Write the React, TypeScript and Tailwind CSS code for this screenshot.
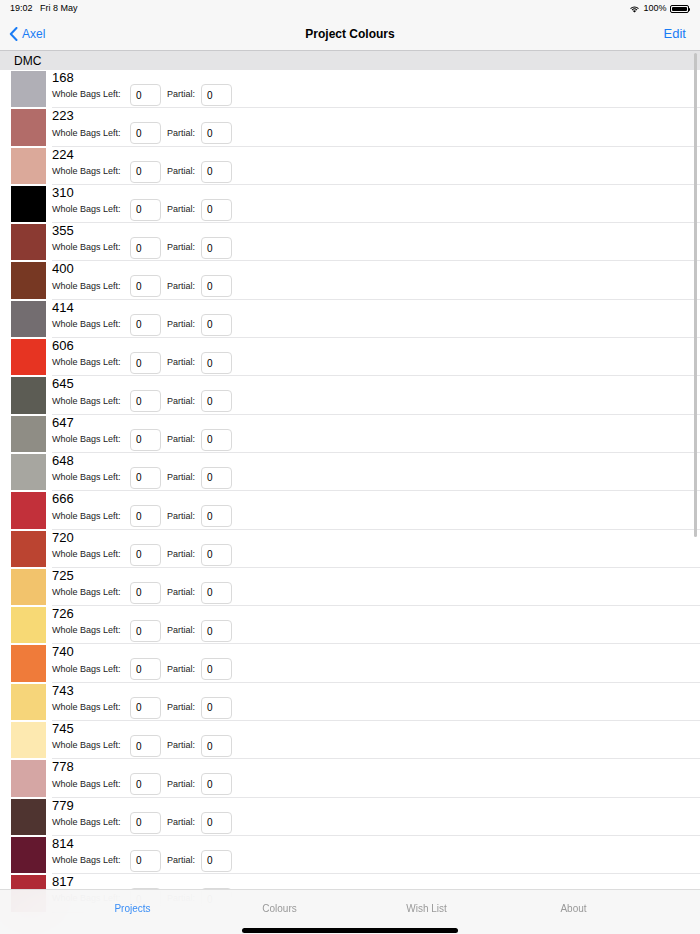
const colours: [string, string][] = [
  ["168", "#b0afb6"],
  ["223", "#b26c69"],
  ["224", "#dba99a"],
  ["310", "#000000"],
  ["355", "#8b3a32"],
  ["400", "#773823"],
  ["414", "#736d70"],
  ["606", "#e63422"],
  ["645", "#5c5c54"],
  ["647", "#8f8d85"],
  ["648", "#a7a6a0"],
  ["666", "#c2303a"],
  ["720", "#bb4431"],
  ["725", "#f2c36c"],
  ["726", "#f7d975"],
  ["740", "#ef7b3a"],
  ["743", "#f6d57a"],
  ["745", "#fde9b0"],
  ["778", "#d5a6a4"],
  ["779", "#4f3430"],
  ["814", "#64182f"],
  ["817", "#b02a35"],
];

function StatusBar() {
  return (
    <div className="h-[18px] flex items-center justify-between px-[10px] text-[9px] text-black">
      <span>19:02&nbsp;&nbsp;&nbsp;Fri 8 May</span>
      <div className="flex items-center gap-[3px]">
        <svg width="11" height="8" viewBox="0 0 11 8">
          <path d="M5.5 7.6 L3.9 5.9 A2.3 2.3 0 0 1 7.1 5.9 Z" fill="#000" />
          <path d="M2.7 4.7 A4 4 0 0 1 8.3 4.7 L7.6 5.4 A3 3 0 0 0 3.4 5.4 Z" fill="#000" />
          <path d="M1.2 3.2 A6.2 6.2 0 0 1 9.8 3.2 L9.1 3.9 A5.2 5.2 0 0 0 1.9 3.9 Z" fill="#000" />
        </svg>
        <span>100%</span>
        <div className="flex items-center">
          <div className="w-[19px] h-[8px] rounded-[2px] border border-black p-[1px]">
            <div className="w-full h-full bg-black rounded-[1px]" />
          </div>
          <div className="w-[1.5px] h-[3px] bg-black rounded-r-sm" />
        </div>
      </div>
    </div>
  );
}

function NavBar() {
  return (
    <div className="h-[33px] flex items-center justify-between px-[9px] border-b border-[#c9c9cc]">
      <div className="flex items-center gap-[4px] text-[#1a7cf5] text-[12px] w-[80px]">
        <svg width="9" height="14" viewBox="0 0 9 14">
          <path d="M7.5 1 L1.8 7 L7.5 13" stroke="#1a7cf5" strokeWidth="2" fill="none" strokeLinecap="round" strokeLinejoin="round" />
        </svg>
        <span>Axel</span>
      </div>
      <span className="text-[12px] font-bold text-black">Project Colours</span>
      <span className="w-[80px] text-right text-[13px] text-[#1a7cf5] pr-[5px]">Edit</span>
    </div>
  );
}

function Row({ code, colour }: { code: string; colour: string }) {
  return (
    <div className="h-[38.3px] flex pl-[11px]">
      <div className="w-[35px] shrink-0 my-[1px]" style={{ backgroundColor: colour }} />
      <div className="flex-1 ml-[6px] border-b border-[#e6e6e8]">
        <div className="h-[14px] leading-[14px] text-[13px] text-black mt-[1px]">{code}</div>
        <div className="h-[22px] flex items-center mt-[-1px] text-[9px] text-[#222]">
          <span className="w-[78px]">Whole Bags Left:</span>
          <div className="w-[31px] h-[22px] border border-[#dadada] rounded-[4px] flex items-center pl-[5px] text-[10px] text-black">0</div>
          <span className="w-[34px] ml-[6px]">Partial:</span>
          <div className="w-[31px] h-[22px] border border-[#dadada] rounded-[4px] flex items-center pl-[5px] text-[10px] text-black">0</div>
        </div>
      </div>
    </div>
  );
}

function TabBar() {
  return (
    <div className="absolute left-0 right-0 bottom-0 h-[45px] bg-[#f7f7f7]/95 backdrop-blur-xl border-t border-[#dcdcdc]">
      <div className="grid grid-cols-4 pl-[59px] pr-[53px] pt-[11px] text-[10px] text-center">
        <span className="text-[#3a8ef6]">Projects</span>
        <span className="text-[#9a9a9a]">Colours</span>
        <span className="text-[#9a9a9a]">Wish List</span>
        <span className="text-[#9a9a9a]">About</span>
      </div>
      <div className="flex justify-center mt-[12px]">
        <div className="w-[216px] h-[5px] rounded-full bg-black" />
      </div>
    </div>
  );
}

export default function App() {
  return (
    <div className="relative w-[700px] h-[934px] overflow-hidden bg-white" style={{ fontFamily: '"Liberation Sans", Arial, sans-serif' }}>
      <div className="bg-[#f7f7f7]">
        <StatusBar />
        <NavBar />
      </div>
      <div className="h-[19px] bg-[#e4e4e6] flex items-center pl-[14px] text-[12px] font-medium text-black">DMC</div>
      <div>
        {colours.map(([code, colour]) => (
          <Row key={code} code={code} colour={colour} />
        ))}
      </div>
      <div className="absolute right-[3px] top-[53px] w-[3px] h-[484px] rounded-full bg-[#c4c4c4]" />
      <TabBar />
    </div>
  );
}
